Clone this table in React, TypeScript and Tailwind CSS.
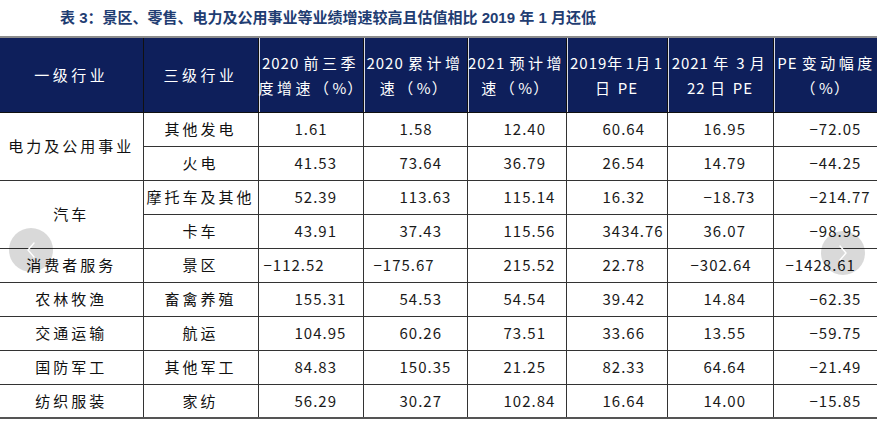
import React from "react";

const CJK = /([\u3000-\u303f\u4e00-\u9fff\uff00-\uffef]+)/;

function T({ s, track = "tracking-[3px]", other = "" }: { s: string; track?: string; other?: string }) {
  const parts = s.split(CJK).filter((p) => p.length > 0);
  return (
    <>
      {parts.map((p, i) =>
        CJK.test(p) ? (
          <span key={i} className={track}>
            {p}
          </span>
        ) : (
          <span key={i} className={other}>
            {p}
          </span>
        )
      )}
    </>
  );
}

type Row = { g?: string; span?: number; sub: string; v: string[]; pads?: string[] };

const rows: Row[] = [
  { g: "电力及公用事业", span: 2, sub: "其他发电", v: ["1.61", "1.58", "12.40", "60.64", "16.95", "-72.05"] },
  { sub: "火电", v: ["41.53", "73.64", "36.79", "26.54", "14.79", "-44.25"] },
  { g: "汽车", span: 2, sub: "摩托车及其他", v: ["52.39", "113.63", "115.14", "16.32", "-18.73", "-214.77"] },
  { sub: "卡车", v: ["43.91", "37.43", "115.56", "3434.76", "36.07", "-98.95"] },
  {
    g: "消费者服务",
    span: 1,
    sub: "景区",
    v: ["-112.52", "-175.67", "215.52", "22.78", "-302.64", "-1428.61"],
    pads: ["pl-[5px]", "pl-[10px]", "pl-[36px]", "pl-[36px]", "pl-[23px]", "pl-[12px]"],
  },
  { g: "农林牧渔", span: 1, sub: "畜禽养殖", v: ["155.31", "54.53", "54.54", "39.42", "14.84", "-62.35"] },
  { g: "交通运输", span: 1, sub: "航运", v: ["104.95", "60.26", "73.51", "33.66", "13.55", "-59.75"] },
  { g: "国防军工", span: 1, sub: "其他军工", v: ["84.83", "150.35", "21.25", "82.33", "64.64", "-21.49"] },
  { g: "纺织服装", span: 1, sub: "家纺", v: ["56.29", "30.27", "102.84", "16.64", "14.00", "-15.85"] },
];

const headers: string[][] = [
  ["一级行业"],
  ["三级行业"],
  ["2020 前三季", "度增速（%）"],
  ["2020 累计增", "速（%）"],
  ["2021 预计增", "速（%）"],
  ["2019年1月1", "日 PE"],
  ["2021 年 3 月", "22 日 PE"],
  ["PE 变动幅度", "（%）"],
];

function Chevron({ dir }: { dir: "left" | "right" }) {
  return (
    <svg width="10" height="16" viewBox="0 0 10 16" fill="none">
      <path
        d={dir === "left" ? "M8 1 L2 8 L8 15" : "M2 1 L8 8 L2 15"}
        stroke="white"
        strokeWidth="1.4"
        strokeLinecap="round"
        strokeLinejoin="round"
      />
    </svg>
  );
}

export default function App() {
  const last = rows.length - 1;
  return (
    <div className="relative w-[877px] h-[430px] overflow-hidden bg-white font-['Noto_Sans_CJK_SC','Liberation_Sans',sans-serif]">
      <div className="h-[36px] flex items-center pl-[60px] pt-[1px] text-[15px] font-bold text-[#1f3d72] font-['Liberation_Sans','Noto_Sans_CJK_SC',sans-serif]">
        表 3：景区、零售、电力及公用事业等业绩增速较高且估值相比 2019 年 1 月还低
      </div>
      <div className="h-[2px] w-[880px] bg-[#8c8c8c]" />
      <table className="table-fixed border-collapse w-[880px]">
        <colgroup>
          <col className="w-[143px]" />
          <col className="w-[115px]" />
          <col className="w-[105px]" />
          <col className="w-[104px]" />
          <col className="w-[99px]" />
          <col className="w-[101px]" />
          <col className="w-[106px]" />
          <col className="w-[107px]" />
        </colgroup>
        <thead>
          <tr className="h-[74px] bg-[#0e1f5b]">
            {headers.map((h, i) => (
              <th
                key={i}
                className={
                  "p-0 text-center align-middle font-normal text-white text-[15px] leading-[25px] whitespace-nowrap border-r border-b border-[#111111] " +
                  (i >= 2 ? "shadow-[inset_1px_0_0_#d9dbe6]" : "")
                }
              >
                {h.map((line, j) => (
                  <div key={j}>
                    <T s={line} track="tracking-[3.5px]" other="tracking-[1px]" />
                  </div>
                ))}
              </th>
            ))}
          </tr>
        </thead>
        <tbody>
          {rows.map((r, ri) => {
            const rowBottom =
              ri === last ? "border-b-2 border-b-[#555555]" : "border-b border-b-[#333333]";
            const groupBottom =
              r.span && ri + r.span - 1 === last
                ? "border-b-2 border-b-[#555555]"
                : "border-b border-b-[#333333]";
            return (
              <tr key={ri} className="h-[34px]">
                {r.g !== undefined && (
                  <td
                    rowSpan={r.span}
                    className={
                      "p-0 text-center align-middle text-[15px] text-[#111111] whitespace-nowrap border-r border-r-[#333333] " +
                      groupBottom
                    }
                  >
                    <T s={r.g} />
                  </td>
                )}
                <td
                  className={
                    "p-0 text-center align-middle text-[15px] text-[#111111] whitespace-nowrap border-r border-r-[#333333] " +
                    rowBottom
                  }
                >
                  <T s={r.sub} />
                </td>
                {r.v.map((val, vi) => (
                  <td
                    key={vi}
                    className={
                      "p-0 text-left align-middle text-[15px] tracking-[1px] text-[#1a1a1a] whitespace-nowrap border-r border-r-[#333333] " +
                      (r.pads ? r.pads[vi] : "pl-[36px]") +
                      " " +
                      rowBottom
                    }
                  >
                    {val.replace("-", "−")}
                  </td>
                ))}
              </tr>
            );
          })}
        </tbody>
      </table>
      <div className="absolute left-[9px] top-[228px] w-[44px] h-[44px] rounded-full bg-[rgba(0,0,0,0.15)] flex items-center justify-center">
        <Chevron dir="left" />
      </div>
      <div className="absolute left-[821px] top-[231px] w-[44px] h-[44px] rounded-full bg-[rgba(0,0,0,0.15)] flex items-center justify-center">
        <Chevron dir="right" />
      </div>
    </div>
  );
}
